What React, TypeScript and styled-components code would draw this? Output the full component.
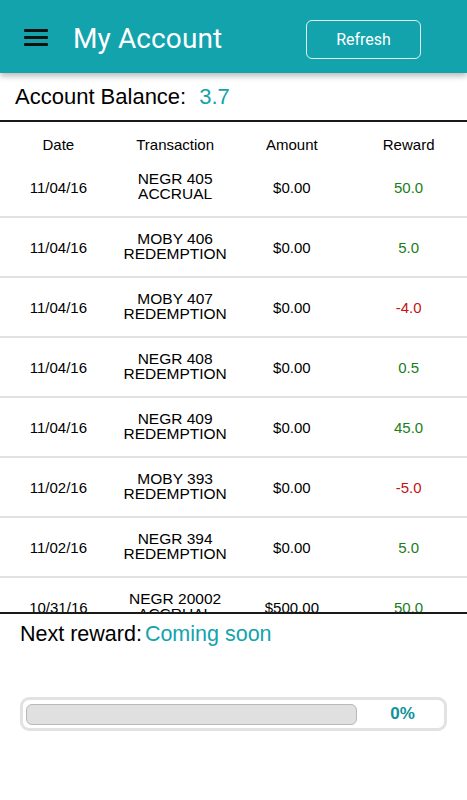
import React from 'react';
import styled, { createGlobalStyle } from 'styled-components';

const GlobalStyle = createGlobalStyle`
  html, body {
    margin: 0;
    padding: 0;
    background: #fff;
  }
  body {
    font-family: 'Liberation Sans', Arial, sans-serif;
    color: #000;
  }
`;

const TEAL = '#13a3ad';

type Tx = {
  date: string;
  code: string;
  kind: string;
  amount: string;
  reward: string;
};

const transactions: Tx[] = [
  { date: '11/04/16', code: 'NEGR 405', kind: 'ACCRUAL', amount: '$0.00', reward: '50.0' },
  { date: '11/04/16', code: 'MOBY 406', kind: 'REDEMPTION', amount: '$0.00', reward: '5.0' },
  { date: '11/04/16', code: 'MOBY 407', kind: 'REDEMPTION', amount: '$0.00', reward: '-4.0' },
  { date: '11/04/16', code: 'NEGR 408', kind: 'REDEMPTION', amount: '$0.00', reward: '0.5' },
  { date: '11/04/16', code: 'NEGR 409', kind: 'REDEMPTION', amount: '$0.00', reward: '45.0' },
  { date: '11/02/16', code: 'MOBY 393', kind: 'REDEMPTION', amount: '$0.00', reward: '-5.0' },
  { date: '11/02/16', code: 'NEGR 394', kind: 'REDEMPTION', amount: '$0.00', reward: '5.0' },
  { date: '10/31/16', code: 'NEGR 20002', kind: 'ACCRUAL', amount: '$500.00', reward: '50.0' },
];

const Page = styled.div`
  width: 467px;
  height: 800px;
  display: flex;
  flex-direction: column;
  overflow: hidden;
`;

const TopBar = styled.header`
  height: 73px;
  flex: none;
  background: ${TEAL};
  display: flex;
  align-items: center;
  padding: 0 46px 0 24px;
  box-shadow: 0 3px 6px rgba(0, 0, 0, 0.28);
  position: relative;
  z-index: 1;
  font-family: Roboto, 'Liberation Sans', sans-serif;
`;

const MenuButton = styled.div`
  width: 24px;
  display: flex;
  flex-direction: column;
  gap: 4px;
  margin-top: 1px;
`;

const MenuBar = styled.span`
  display: block;
  height: 3px;
  background: #111;
  border-radius: 1px;
`;

const Title = styled.h1`
  margin: 4px 0 0 25px;
  flex: 1;
  font-size: 28px;
  font-weight: 400;
  color: #fff;
  letter-spacing: 0.1px;
`;

const RefreshButton = styled.button`
  width: 115px;
  height: 39px;
  border: 1px solid rgba(255, 255, 255, 0.85);
  border-radius: 6px;
  background: transparent;
  color: #fff;
  font-family: Roboto, 'Liberation Sans', sans-serif;
  font-size: 16px;
  margin-top: 5px;
`;

const BalanceRow = styled.div`
  height: 47px;
  flex: none;
  display: flex;
  align-items: center;
  padding: 0 15px;
  font-size: 22px;
  border-bottom: 2px solid #1a1a1a;
`;

const Value = styled.span<{ $gap?: number }>`
  color: ${TEAL};
  margin-left: ${({ $gap }) => $gap ?? 0}px;
`;

const TableArea = styled.div`
  height: 490px;
  flex: none;
  overflow: hidden;
  border-bottom: 2px solid #1a1a1a;
`;

const Grid = styled.div`
  display: grid;
  grid-template-columns: repeat(4, 1fr);
`;

const HeadRow = styled(Grid)`
  height: 36px;
  align-items: end;
  padding-bottom: 5px;
  box-sizing: border-box;
  font-size: 15px;
`;

const Row = styled(Grid)`
  height: 60px;
  align-items: center;
  border-bottom: 2px solid #e2e2e2;
  box-sizing: border-box;
  font-size: 15px;
`;

const Cell = styled.div<{ $tone?: 'pos' | 'neg' }>`
  text-align: center;
  color: ${({ $tone }) => ($tone === 'pos' ? '#1c7d1c' : $tone === 'neg' ? '#c41212' : '#000')};
`;

const TxCell = styled(Cell)`
  line-height: 15px;
  font-size: 15.5px;
  margin-top: -3px;
`;

const NextReward = styled.div`
  padding: 8px 20px 0;
  font-size: 21.5px;
  height: 75px;
`;

const ProgressBox = styled.div`
  margin: 0 20px;
  height: 34px;
  border: 3px solid #e2e2e2;
  border-radius: 9px;
  box-sizing: border-box;
  display: flex;
  align-items: center;
  padding: 0 0 0 3px;
`;

const Track = styled.div`
  width: 331px;
  height: 21px;
  background: #e0e0e0;
  border: 1px solid #b9b9b9;
  border-radius: 6px;
  box-sizing: border-box;
  overflow: hidden;
`;

const Fill = styled.div`
  height: 100%;
  background: ${TEAL};
`;

const Percent = styled.div`
  flex: 1;
  text-align: center;
  font-weight: 700;
  font-size: 17px;
  color: #12919c;
  padding-left: 4px;
`;

export default function App() {
  const progress = 0;
  return (
    <>
      <GlobalStyle />
      <Page>
        <TopBar>
          <MenuButton>
            <MenuBar />
            <MenuBar />
            <MenuBar />
          </MenuButton>
          <Title>My Account</Title>
          <RefreshButton>Refresh</RefreshButton>
        </TopBar>

        <BalanceRow>
          Account Balance:<Value $gap={13}>3.7</Value>
        </BalanceRow>

        <TableArea>
          <HeadRow>
            <Cell>Date</Cell>
            <Cell>Transaction</Cell>
            <Cell>Amount</Cell>
            <Cell>Reward</Cell>
          </HeadRow>
          {transactions.map((tx, i) => (
            <Row key={i}>
              <Cell>{tx.date}</Cell>
              <TxCell>
                {tx.code}
                <br />
                {tx.kind}
              </TxCell>
              <Cell>{tx.amount}</Cell>
              <Cell $tone={tx.reward.startsWith('-') ? 'neg' : 'pos'}>{tx.reward}</Cell>
            </Row>
          ))}
        </TableArea>

        <NextReward>
          Next reward:<Value $gap={3}>Coming soon</Value>
        </NextReward>

        <ProgressBox>
          <Track>
            <Fill style={{ width: `${progress}%` }} />
          </Track>
          <Percent>{progress}%</Percent>
        </ProgressBox>
      </Page>
    </>
  );
}
